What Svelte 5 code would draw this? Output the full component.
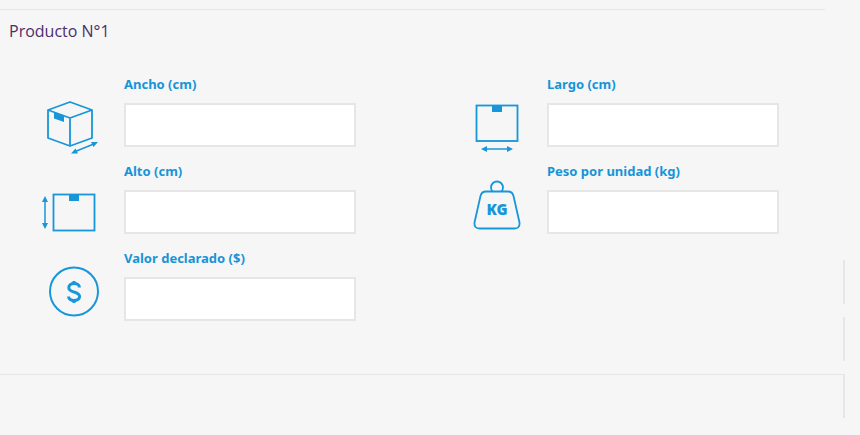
<script>
  const bars = [0, 1, 2];
</script>

<div class="page">
  <div class="top-rule"></div>
  <h2 class="title">Producto N°1</h2>

  <div class="grid">
    <div class="field">
      <div class="icon">
        <svg width="64" height="64" viewBox="0 0 64 64" fill="none" stroke="#1796d9" stroke-width="1.8" stroke-linejoin="round">
          <path d="M6 19 28 11 50 19 50 47 28 55 6 47Z"/>
          <path d="M6 19 28 27 50 19M28 27V55"/>
          <path d="M12 21 22 24.5 22 31 12 27.5Z" fill="#1796d9" stroke="none"/>
          <path d="M32 61 53 52.5" stroke-width="1.5"/>
          <path d="M29 62.5 36 62.5 33.5 57.5ZM56 51 49 51 51.5 56Z" fill="#1796d9" stroke="none"/>
        </svg>
      </div>
      <div class="control">
        <label for="ancho">Ancho (cm)</label>
        <input id="ancho" type="text" />
      </div>
    </div>
    <div class="field">
      <div class="icon">
        <svg width="64" height="64" viewBox="0 0 64 64" fill="none" stroke="#1796d9" stroke-width="1.8">
          <rect x="11.5" y="14.5" width="41" height="35.5"/>
          <rect x="27" y="14" width="10" height="7" fill="#1796d9" stroke="none"/>
          <path d="M19 58H45" stroke-width="1.5"/>
          <path d="M16 58 22 55V61ZM48 58 42 55V61Z" fill="#1796d9" stroke="none"/>
        </svg>
      </div>
      <div class="control">
        <label for="largo">Largo (cm)</label>
        <input id="largo" type="text" />
      </div>
    </div>
    <div class="field">
      <div class="icon">
        <svg width="64" height="64" viewBox="0 0 64 64" fill="none" stroke="#1796d9" stroke-width="1.8">
          <rect x="11.5" y="16.5" width="41" height="36"/>
          <rect x="27" y="16" width="10" height="7" fill="#1796d9" stroke="none"/>
          <path d="M3 21V48" stroke-width="1.5"/>
          <path d="M3 18 6 24H0ZM3 51 6 45H0Z" fill="#1796d9" stroke="none"/>
        </svg>
      </div>
      <div class="control">
        <label for="alto">Alto (cm)</label>
        <input id="alto" type="text" />
      </div>
    </div>
    <div class="field">
      <div class="icon">
        <svg width="64" height="64" viewBox="0 0 64 64" fill="none" stroke="#1796d9" stroke-width="1.8" stroke-linejoin="round">
          <circle cx="32" cy="9.5" r="6"/>
          <path d="M21 13.5H43Q47.5 13.5 48.5 18L54.5 44.5Q55 50.5 49.5 50.5H14.5Q9 50.5 9.5 44.5L15.5 18Q16.5 13.5 21 13.5Z" fill="#f6f6f6"/>
          <text x="32" y="37" text-anchor="middle" class="kg">KG</text>
        </svg>
      </div>
      <div class="control">
        <label for="peso">Peso por unidad (kg)</label>
        <input id="peso" type="text" />
      </div>
    </div>
    <div class="field">
      <div class="icon">
        <svg width="64" height="64" viewBox="0 0 64 64" fill="none" stroke="#1796d9" stroke-width="2">
          <circle cx="32" cy="26.5" r="24"/>
          <path d="M37.4 22.5C37.4 20 35 18.6 32 18.6C29 18.6 26.8 20.2 26.8 22.7C26.8 25.5 29.5 26.2 32 27C34.5 27.8 37.6 28.6 37.6 31.5C37.6 34 35 35.4 32 35.4C29 35.4 26.6 34 26.6 31.5" stroke-width="3"/>
          <path d="M32 16V19M32 35V38" stroke-width="3"/>
        </svg>
      </div>
      <div class="control">
        <label for="valor">Valor declarado ($)</label>
        <input id="valor" type="text" />
      </div>
    </div>
  </div>

  <div class="bottom-rule"></div>

  <div class="edge-bars">
    {#each bars as bar (bar)}
      <span class="edge-bar"></span>
    {/each}
  </div>
</div>

<style>
  :global(body) {
    margin: 0;
    background: #f6f6f6;
  }
  .page {
    position: relative;
    width: 860px;
    height: 435px;
    overflow: hidden;
    background: #f6f6f6;
    font-family: "Noto Sans", sans-serif;
  }
  .top-rule {
    margin-top: 9px;
    width: 825px;
    height: 1px;
    background: #e6e6e6;
  }
  .title {
    margin: 10px 0 0 9px;
    height: 22px;
    font-size: 16px;
    line-height: 22px;
    font-weight: 400;
    font-family: "Open Sans", sans-serif;
    color: #4b2e6e;
  }
  .grid {
    display: grid;
    grid-template-columns: 423px 320px;
    grid-auto-rows: 87px;
    margin: 18px 0 0 42px;
    height: 314px;
  }
  .field {
    display: flex;
    align-items: flex-end;
    height: 87px;
  }
  .icon {
    width: 64px;
    height: 64px;
    margin-right: 18px;
    margin-bottom: -8px;
    flex: none;
  }
  .icon svg { display: block; overflow: visible; }
  .kg {
    font-family: "Noto Sans", sans-serif;
    font-size: 15px;
    font-weight: 900;
    fill: #1796d9;
    stroke: none;
  }
  .control {
    display: flex;
    flex-direction: column;
    width: 232px;
  }
  label {
    font-size: 13px;
    font-weight: 700;
    line-height: 18px;
    color: #1794d8;
    margin-bottom: 10px;
  }
  input {
    box-sizing: border-box;
    width: 232px;
    height: 44px;
    border: 2px solid #e6e6e6;
    background: #fff;
    padding: 0;
    margin: 0;
    outline: none;
  }
  .bottom-rule {
    width: 843px;
    height: 1px;
    background: #e6e6e6;
  }
  .edge-bars {
    position: absolute;
    left: 843px;
    top: 260px;
    display: flex;
    flex-direction: column;
    gap: 13px;
  }
  .edge-bar {
    display: block;
    width: 2px;
    height: 44px;
    background: #e6e6e6;
  }
</style>
